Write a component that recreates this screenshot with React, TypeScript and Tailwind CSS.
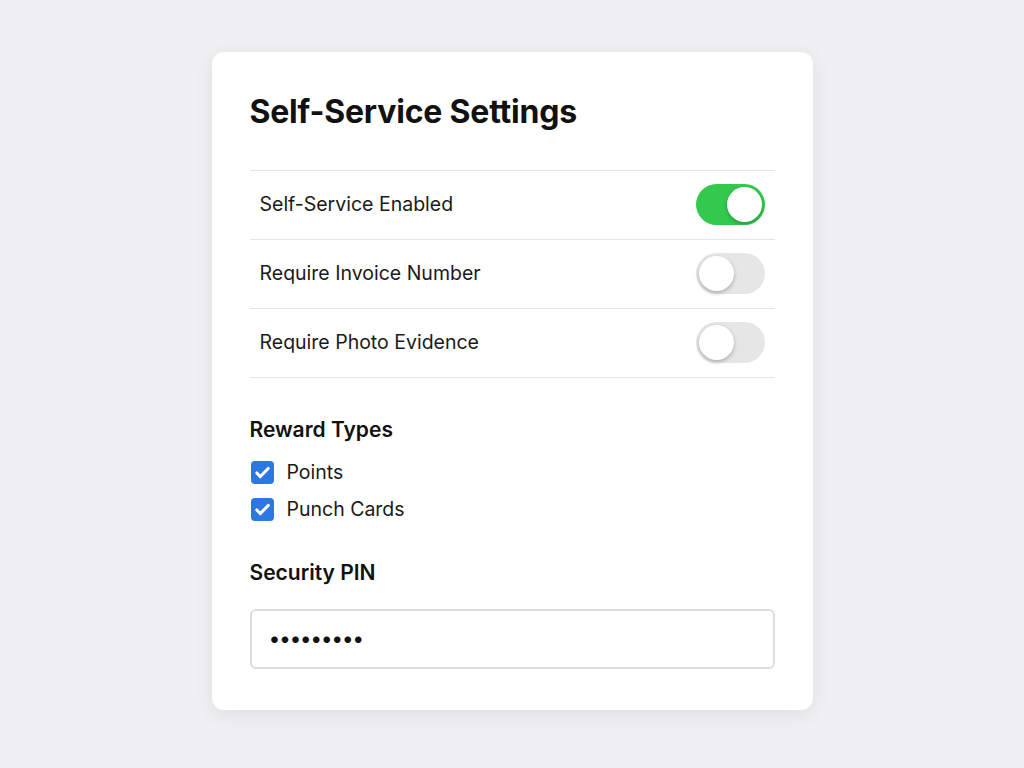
import React from "react";

const font = { fontFamily: "Inter, 'Noto Sans', sans-serif" };

const Toggle = ({ on }: { on: boolean }) => (
  <div
    className={
      on
        ? "flex h-[41px] w-[69px] items-center justify-end rounded-full bg-[#33c94f] px-[3px]"
        : "flex h-[41px] w-[69px] items-center justify-start rounded-full bg-[#e6e6e6] px-[3px]"
    }
  >
    <div className="h-[35px] w-[35px] rounded-full bg-white shadow-[0_2px_4px_rgba(0,0,0,0.25)]" />
  </div>
);

const Check = () => (
  <div className="flex h-[23px] w-[23px] items-center justify-center rounded-[4px] bg-[#2b78e4]">
    <svg width="19" height="19" viewBox="0 0 16 16" fill="none">
      <path d="M3.2 8.4l3 3L12.8 4.6" stroke="white" strokeWidth="2.6" strokeLinecap="round" strokeLinejoin="round" />
    </svg>
  </div>
);

const rows = [
  { label: "Self-Service Enabled", on: true },
  { label: "Require Invoice Number", on: false },
  { label: "Require Photo Evidence", on: false },
];

export default function App() {
  return (
    <div className="flex min-h-screen justify-center bg-[#f0f0f2] pt-[52px]" style={font}>
      <div className="h-[658px] w-[601px] rounded-[12px] bg-white px-[38px] pt-[38px] shadow-[0_4px_20px_rgba(0,0,0,0.08)]">
        <h1 className="text-[32px] font-bold leading-[44px] tracking-[-0.2px] text-[#111]">Self-Service Settings</h1>

        <div className="mt-[36px] border-t border-[#e5e5e5]">
          {rows.map((r) => (
            <div key={r.label} className="flex h-[69px] items-center justify-between border-b border-[#e5e5e5] px-[10px]">
              <span className="text-[19.5px] text-[#1a1a1a]">{r.label}</span>
              <div className="-mt-[2px]">
                <Toggle on={r.on} />
              </div>
            </div>
          ))}
        </div>

        <h2 className="mt-[38px] text-[21px] font-semibold leading-[28px] text-[#111]">Reward Types</h2>
        <div className="mt-[17px] flex flex-col gap-[14px]">
          {["Points", "Punch Cards"].map((t) => (
            <div key={t} className="flex items-center gap-[13px] pl-px">
              <Check />
              <span className="text-[19.5px] leading-[23px] text-[#1a1a1a]">{t}</span>
            </div>
          ))}
        </div>

        <h2 className="mt-[38px] text-[21px] font-semibold leading-[28px] text-[#111]">Security PIN</h2>
        <div className="mt-[22px] flex h-[60px] w-[525px] items-center rounded-[6px] border-2 border-[#dcdcdc] px-[18px]">
          <span className="text-[21px] font-bold tracking-[0.5px] text-[#111]">•••••••••</span>
        </div>
      </div>
    </div>
  );
}
